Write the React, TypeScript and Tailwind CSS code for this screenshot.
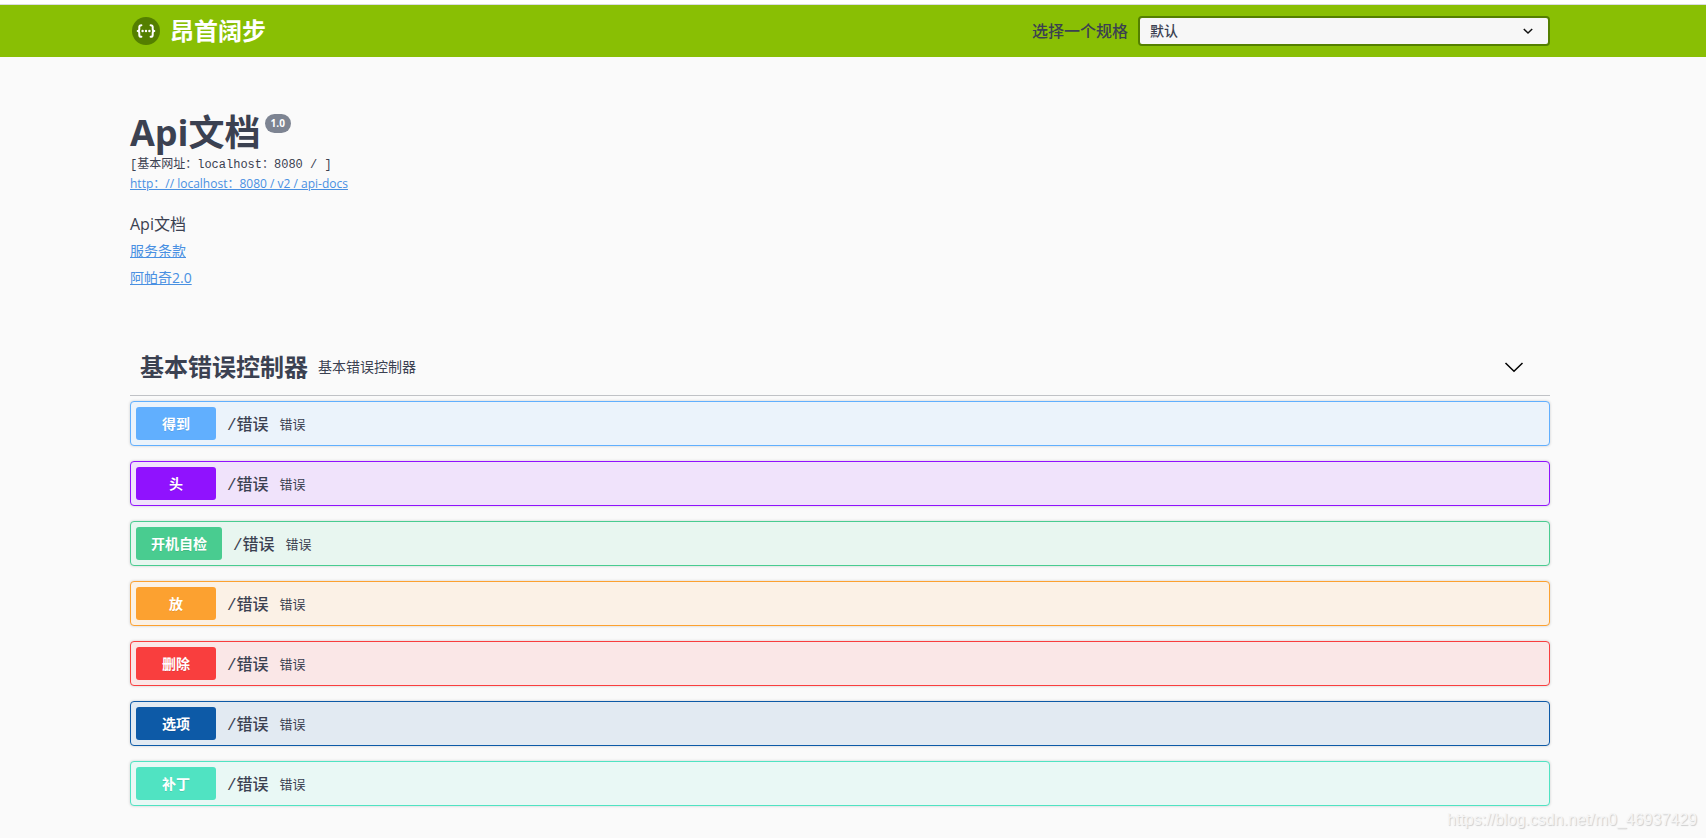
import { useState } from 'react';

interface Operation {
  method: string;
  box: string;
  badge: string;
}

const operations: Operation[] = [
  { method: '得到', box: 'border-[#61affe] bg-[#ebf3fb]', badge: 'bg-[#61affe]' },
  { method: '头', box: 'border-[#9012fe] bg-[#f0e3fb]', badge: 'bg-[#9012fe]' },
  { method: '开机自检', box: 'border-[#49cc90] bg-[#e8f6f0]', badge: 'bg-[#49cc90]' },
  { method: '放', box: 'border-[#fca130] bg-[#fbf1e6]', badge: 'bg-[#fca130]' },
  { method: '删除', box: 'border-[#f93e3e] bg-[#fae7e7]', badge: 'bg-[#f93e3e]' },
  { method: '选项', box: 'border-[#0d5aa7] bg-[#e2eaf2]', badge: 'bg-[#0d5aa7]' },
  { method: '补丁', box: 'border-[#50e3c2] bg-[#e9f8f5]', badge: 'bg-[#50e3c2]' },
];

function Logo() {
  return (
    <svg className="h-7 w-7" viewBox="0 0 28 28" fill="none">
      <circle cx="14" cy="14" r="14" fill="#547f00" />
      <g stroke="#fff" strokeWidth="2" strokeLinecap="round" strokeLinejoin="round">
        <path d="M9.4 8.2c-1.6 0-2.1.5-2.1 1.9v1.7c0 1.2-.5 2.2-1.6 2.2 1.1 0 1.6 1 1.6 2.2v1.7c0 1.4.5 1.9 2.1 1.9" />
        <path d="M18.6 8.2c1.6 0 2.1.5 2.1 1.9v1.7c0 1.2.5 2.2 1.6 2.2-1.1 0-1.6 1-1.6 2.2v1.7c0 1.4-.5 1.9-2.1 1.9" />
      </g>
      <circle cx="10.6" cy="14" r="1.2" fill="#fff" />
      <circle cx="14" cy="14" r="1.2" fill="#fff" />
      <circle cx="17.4" cy="14" r="1.2" fill="#fff" />
    </svg>
  );
}

function OperationRow({ method, box, badge }: Operation) {
  return (
    <button type="button" className={`flex w-full items-center rounded border p-[5px] text-left shadow-[0_0_3px_rgba(0,0,0,0.19)] ${box}`}>
      <span className={`min-w-20 rounded-[3px] px-[15px] py-1.5 text-center text-sm/[21px] font-bold text-white [text-shadow:0_1px_0_rgba(0,0,0,0.1)] ${badge}`}>
        {method}
      </span>
      <span className="px-[11px] pt-1 font-['Liberation_Mono','Noto_Sans_CJK_SC',monospace] text-base/5 font-medium">/错误</span>
      <span className="text-[13px]/5">错误</span>
    </button>
  );
}

export default function App() {
  const [open, setOpen] = useState(true);

  return (
    <div className="relative min-h-screen bg-[#fafafa] font-['Open_Sans','Noto_Sans_CJK_SC',sans-serif] text-[#3b4151]">
      <header className="border-t-4 border-white bg-[#89bf04]">
        <div className="border-t border-[#dadce0] pr-[26px]">
          <div className="mx-auto flex h-[52px] max-w-[1460px] items-center px-5">
            <a href="#" className="flex flex-1 items-center gap-[10px] pl-0.5 text-2xl font-bold text-white">
              <Logo />
              <span>昂首阔步</span>
            </a>
            <div className="flex items-center gap-[10px]">
              <label htmlFor="spec" className="text-base font-medium">选择一个规格</label>
              <div className="relative">
                <select id="spec" className="h-[30px] w-[412px] appearance-none rounded border-2 border-[#547f00] bg-[#f7f7f7] pl-[10px] text-sm font-medium">
                  <option>默认</option>
                </select>
                <svg className="pointer-events-none absolute top-[10px] right-[17px] h-[10px] w-[10px]" viewBox="0 0 10 10" fill="none">
                  <path d="M.8 3L5 7l4.200-4" stroke="#111" strokeWidth="1.5" />
                </svg>
              </div>
            </div>
          </div>
        </div>
      </header>

      <div className="pr-[26px]">
        <main className="mx-auto max-w-[1460px] px-5">
          <section className="flex flex-col items-start pt-[52px]">
            <h1 className="flex items-start gap-1 text-4xl/[47px] font-bold">
              Api文档
              <span className="mt-[5px] rounded-full bg-[#7d8492] px-1.5 text-[10px]/[19px] text-white">1.0</span>
            </h1>
            <p className="font-['Liberation_Mono','Noto_Sans_CJK_SC',monospace] text-xs/[18px]">[基本网址：localhost：8080 / ]</p>
            <a href="#" className="text-xs/5 text-[#4990e2] underline">http：// localhost：8080 / v2 / api-docs</a>
            <p className="mt-[18px] text-base/6">Api文档</p>
            <a href="#" className="mt-[3px] text-sm/6 text-[#4990e2] underline">服务条款</a>
            <a href="#" className="mt-[3px] text-sm/6 text-[#4990e2] underline">阿帕奇2.0</a>
          </section>

          <section className="pt-[49px] pb-8">
            <button
              type="button"
              aria-expanded={open}
              onClick={() => setOpen(!open)}
              className="mb-[5px] flex w-full items-center border-b border-[#3b4151]/30 py-[10px] pr-[26px] pl-[10px] text-left"
            >
              <h2 className="text-2xl/9 font-bold">基本错误控制器</h2>
              <span className="flex-1 pl-[10px] text-sm">基本错误控制器</span>
              <svg className="h-5 w-5" viewBox="0 0 20 20" fill="none">
                <path d="M1.500 6L10 14.200 18.500 6" stroke="#000" strokeWidth="1.500" />
              </svg>
            </button>
            {open && (
              <div className="flex flex-col gap-[15px]">
                {operations.map((op) => (
                  <OperationRow key={op.method} {...op} />
                ))}
              </div>
            )}
          </section>
        </main>
      </div>

      <div className="absolute right-[9px] bottom-2 font-['Liberation_Sans',sans-serif] text-base/5 text-[#f5f5f5] [text-shadow:1px_1px_1px_rgba(0,0,0,0.18)]">
        https://blog.csdn.net/m0_46937429
      </div>
    </div>
  );
}
